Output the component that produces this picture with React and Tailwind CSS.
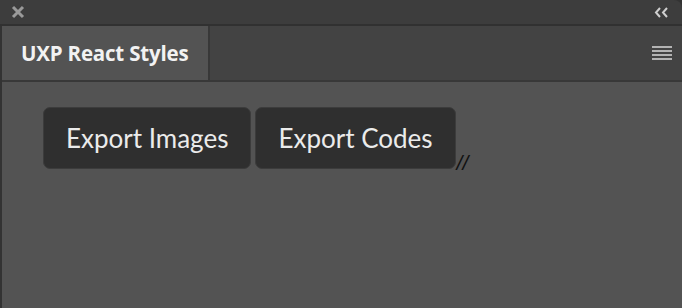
import React from 'react';

const Button = ({ children }) => (
  <button className="h-[62px] rounded-[7px] border border-[#3c3c3c] bg-[#2f2f2f] px-[22px] text-[26px] text-[#ebebeb] leading-none">
    {children}
  </button>
);

const App = () => {
  return (
    <div className="w-[682px] h-[308px] flex flex-col bg-[#333333] overflow-hidden font-['Lato',sans-serif]">
      {/* Title bar */}
      <div className="h-[26px] flex items-center justify-between pl-[11px] pr-[13px] bg-[#3d3d3d] rounded-tr-[8px] border-b-2 border-[#313131]">
        <svg width="14" height="14" viewBox="0 0 14 14">
          <path d="M2 2 L12 12 M12 2 L2 12" stroke="#9a9a9a" strokeWidth="3" />
        </svg>
        <svg width="15" height="11" viewBox="0 0 15 11">
          <path d="M6 1 L2 5.5 L6 10 M13 1 L9 5.5 L13 10" fill="none" stroke="#cfcfcf" strokeWidth="2" />
        </svg>
      </div>

      {/* Tab row */}
      <div className="h-[56px] flex bg-[#434343] border-b-2 border-[#383838] ml-[2px]">
        <div className="w-[208px] flex items-center pl-[19px] bg-[#535353] border-r-2 border-[#383838]">
          <span className="text-[20.5px] font-bold text-[#f2f2f2] font-['Open_Sans',sans-serif] tracking-[-0.2px]">UXP React Styles</span>
        </div>
        <div className="flex-1 flex items-center justify-end pr-[10px]">
          <div className="flex flex-col gap-[2px]">
            <div className="w-[20px] h-[2px] bg-[#b3b3b3]" />
            <div className="w-[20px] h-[2px] bg-[#b3b3b3]" />
            <div className="w-[20px] h-[2px] bg-[#b3b3b3]" />
            <div className="w-[20px] h-[2px] bg-[#b3b3b3]" />
          </div>
        </div>
      </div>

      {/* Content */}
      <div className="flex-1 bg-[#535353] ml-[2px] pl-[41px] pt-[25px]">
        <div className="flex items-end">
          <div className="flex gap-[4px]">
            <Button>Export Images</Button>
            <Button>Export Codes</Button>
          </div>
          <span className="italic text-[21px] text-[#111111] leading-none mb-[-4px] ml-[1px] font-['Liberation_Sans',sans-serif]">//</span>
        </div>
      </div>
    </div>
  );
};

export default App;
